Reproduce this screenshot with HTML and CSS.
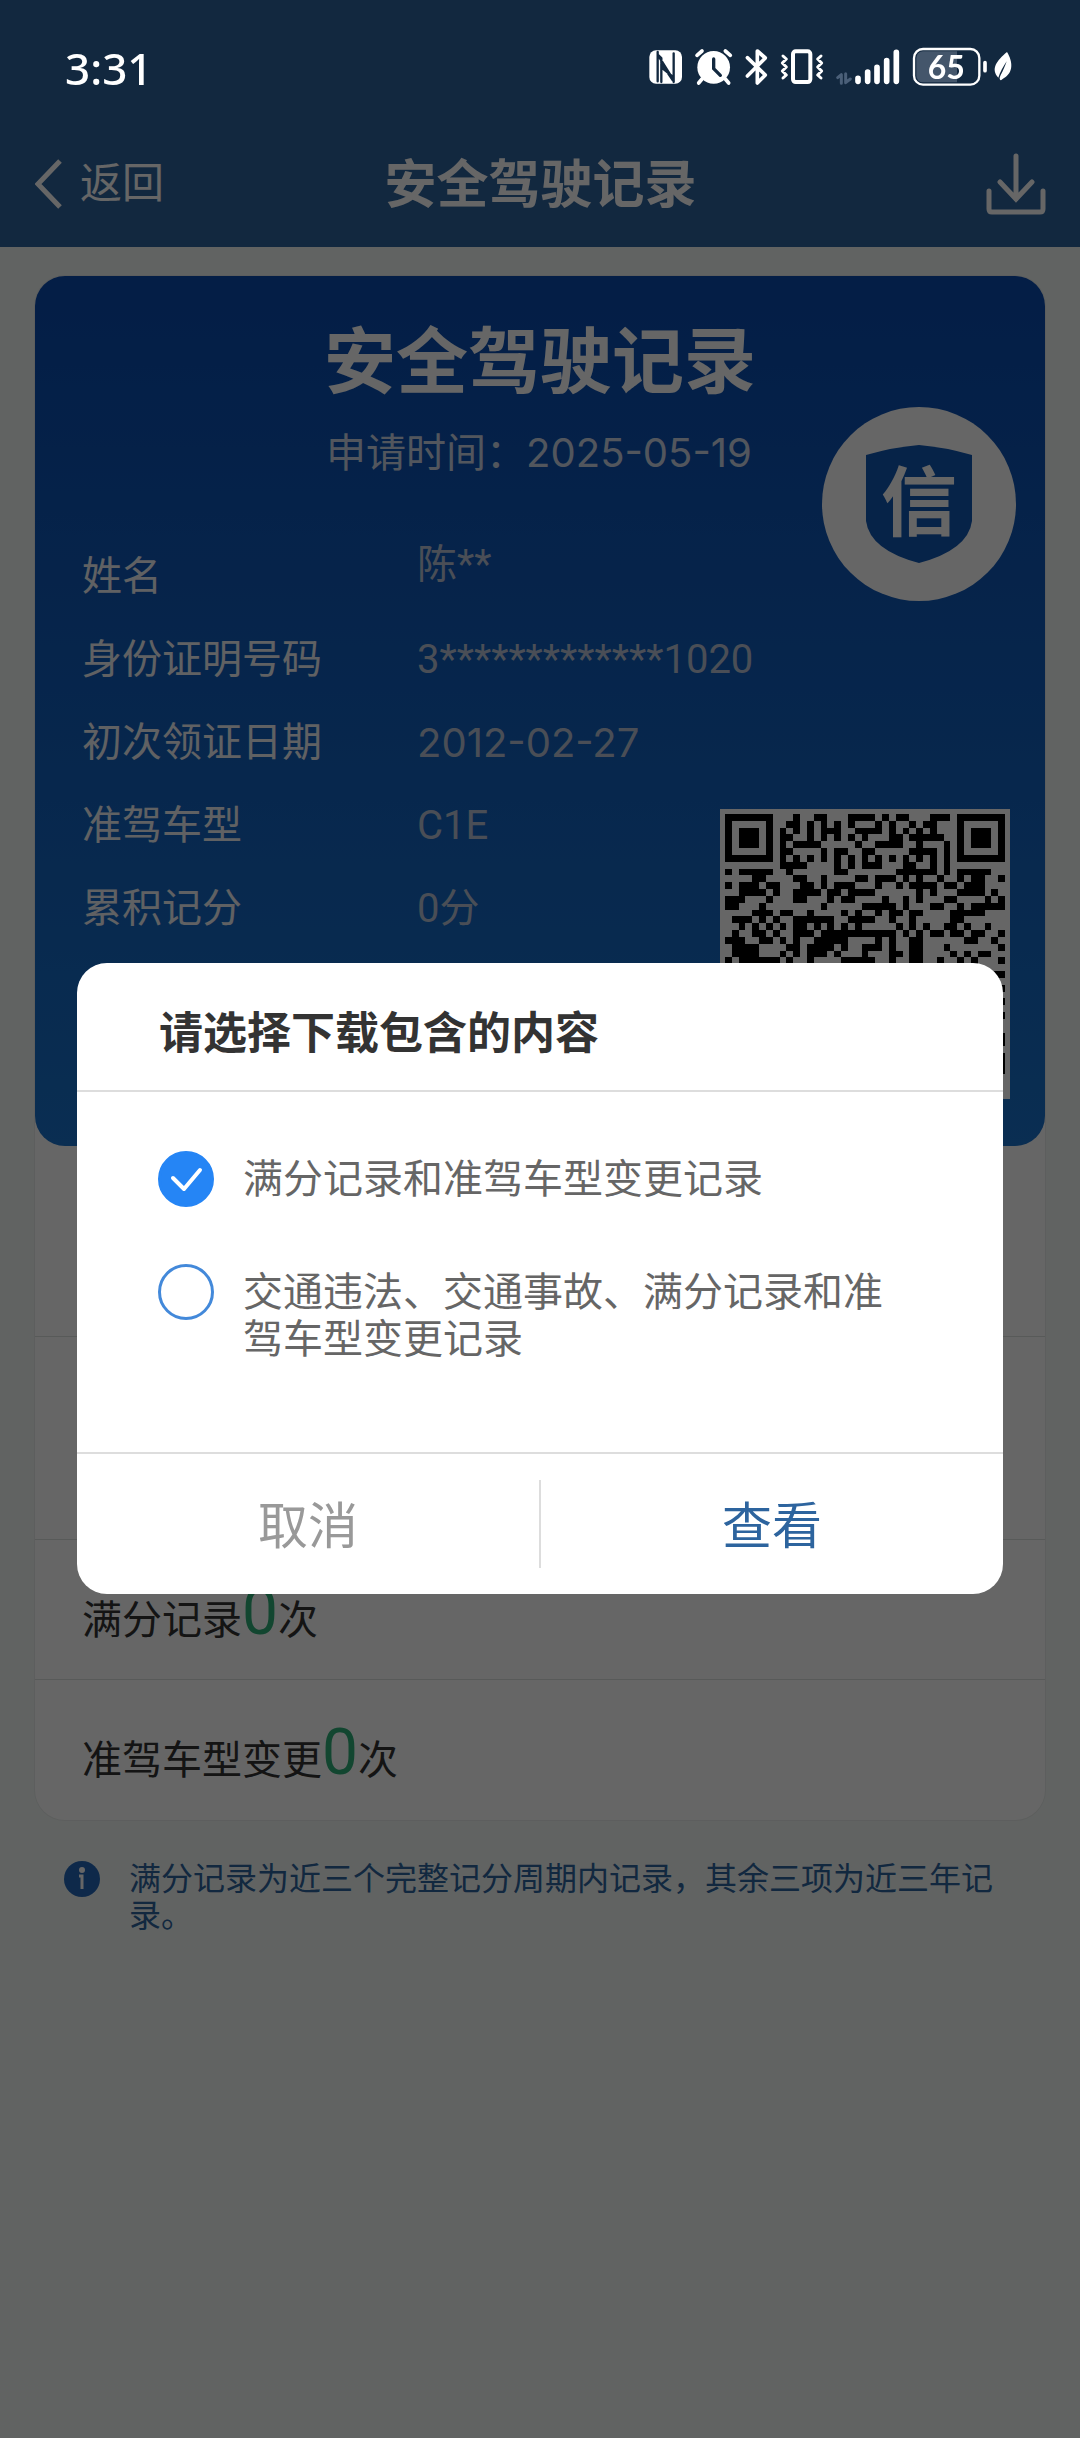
FILE: index.html
```html
<!DOCTYPE html>
<html lang="zh-CN">
<head>
<meta charset="utf-8">
<meta name="viewport" content="width=device-width, initial-scale=1">
<title>安全驾驶记录</title>
<link rel="stylesheet" href="styles.css">
</head>
<body>
<header class="topbar">
  <div class="status">
    <time class="clock">3:31</time>
    <svg class="status-icons" viewBox="0 0 1200 240" fill="none" stroke-linecap="round" stroke-linejoin="round" aria-hidden="true">
      <!-- NFC -->
      <rect x="28" y="61" width="98" height="100" rx="20" fill="#fff"/>
      <path d="M53 66v88M53 74L98 146M64 100L98 150M53 74L64 84V156M101 156V70M101 142L64 112" stroke="#12283f" stroke-width="7"/>
      <!-- alarm -->
      <circle cx="221" cy="112" r="49" fill="#fff"/>
      <path d="M171 76l15-13M271 76l-15-13M186 147l-10 12M256 147l10 12" stroke="#fff" stroke-width="11"/>
      <path d="M221 87v29l20 20" stroke="#12283f" stroke-width="10"/>
      <!-- bluetooth -->
      <path d="M322 83l54 52-24 24V63l24 21-54 54" stroke="#fff" stroke-width="11"/>
      <!-- vibrate -->
      <rect x="459" y="64" width="52" height="92" rx="8" stroke="#fff" stroke-width="12"/>
      <path d="M429 78l10 9-12 12 12 12-12 12 12 12-10 9M543 78l-10 9 12 12-12 12 12 12-12 12 10 9" stroke="#fff" stroke-width="9"/>
      <!-- data -->
      <path d="M593 143l11-9v26M617 131v27l14-11" stroke="#4a5f78" stroke-width="9"/>
      <!-- signal -->
      <path d="M654 145v9M683 126v28M711 112v42M740 92v62M769 67v87" stroke="#fff" stroke-width="17"/>
      <!-- battery -->
      <rect x="822" y="57" width="196" height="107" rx="27" stroke="#fff" stroke-width="7"/>
      <path d="M849 64h102v93h-102a20 20 0 0 1-20-20V84a20 20 0 0 1 20-20z" fill="#44566b"/>
      <path d="M1035 98v24" stroke="#fff" stroke-width="11"/>
      <text class="battery-level" x="919" y="147" text-anchor="middle">65</text>
      <!-- leaf -->
      <path d="M1101 66c18 29 20 62-10 79l-8 6c-7-3-3-10-1-16 8-15 13-26 18-41-10 16-20 32-25 49-24-26-5-51 26-77z" fill="#fff"/>
    </svg>
  </div>
  <nav class="nav">
    <a class="back" href="#">
      <svg class="back-icon" viewBox="0 0 28 50" aria-hidden="true"><path d="M25 2L3 25l22 23"/></svg>
      返回
    </a>
    <h1 class="nav-title">安全驾驶记录</h1>
    <button class="download" type="button" aria-label="下载">
      <svg class="download-icon" viewBox="0 0 60 62" aria-hidden="true"><path d="M30 3v43M14 29l16 17 16-17M3 38v18q0 3 3 3h48q3 0 3-3V38"/></svg>
    </button>
  </nav>
</header>

<main class="page">
  <section class="sheet">
    <div class="card">
      <h2 class="card-title">安全驾驶记录</h2>
      <p class="card-date">申请时间：<time class="date">2025-05-19</time></p>
      <div class="badge">
        <svg class="shield" viewBox="0 0 106 120" aria-hidden="true"><path d="M0 11Q28 3 53 1q25 2 53 10v66q-4 29-53 42Q4 106 0 77z"/></svg>
        <span class="badge-text">信</span>
      </div>
      <div class="card-body">
        <dl class="details">
          <dt>姓名</dt><dd class="top">陈**</dd>
          <dt>身份证明号码</dt><dd>3*************1020</dd>
          <dt>初次领证日期</dt><dd class="date">2012-02-27</dd>
          <dt>准驾车型</dt><dd>C1E</dd>
          <dt>累积记分</dt><dd>0分</dd>
        </dl>
        <svg class="qr" viewBox="0 0 41 41" role="img" aria-label="二维码">
          <!-- finder patterns -->
          <path d="M.5 .5h6v6h-6zM34.5 .5h6v6h-6zM.5 34.5h6v6h-6z"/>
          <path d="M2 3.5h3M36 3.5h3M2 37.5h3" stroke-width="3"/>
          <!-- data modules, one row of runs per line -->
          <path d="M10 .5h1M13 .5h2M18 .5h4M23 .5h1M25 .5h2M30 .5h3
M9 1.5h2M12 1.5h1M14 1.5h1M16 1.5h1M18 1.5h1M22 1.5h1M24 1.5h1M27 1.5h1M29 1.5h2
M8 2.5h1M10 2.5h1M12 2.5h1M14 2.5h3M19 2.5h4M24 2.5h1M26 2.5h1M28 2.5h1M30 2.5h1
M8 3.5h2M12 3.5h1M14 3.5h1M16 3.5h1M18 3.5h1M20 3.5h1M24 3.5h2M27 3.5h5
M8 4.5h1M10 4.5h4M19 4.5h1M22 4.5h2M24 4.5h2M28 4.5h1M32 4.5h1
M8 5.5h2M14 5.5h1M16 5.5h2M20 5.5h2M27 5.5h4M32 5.5h1
M8 6.5h1M10 6.5h1M12 6.5h1M14 6.5h1M16 6.5h1M18 6.5h1M20 6.5h1M22 6.5h1M24 6.5h1M26 6.5h1M28 6.5h1M30 6.5h1M32 6.5h1
M8 7.5h4M16 7.5h1M18 7.5h1M20 7.5h3M26 7.5h2M30 7.5h1M32 7.5h1
M0 8.5h1M2 8.5h5M9 8.5h1M16 8.5h2M25 8.5h6M32 8.5h1M34 8.5h5
M4 9.5h2M10 9.5h2M14 9.5h1M19 9.5h2M22 9.5h3M26 9.5h1M28 9.5h1M31 9.5h1M34 9.5h1M36 9.5h2M40 9.5h1
M0 10.5h1M2 10.5h3M6 10.5h2M11 10.5h2M14 10.5h1M16 10.5h3M22 10.5h1M25 10.5h1M27 10.5h4M32 10.5h2M35 10.5h3
M2 11.5h4M7 11.5h1M10 11.5h4M15 11.5h2M18 11.5h4M28 11.5h1M30 11.5h1M34 11.5h4M39 11.5h1
M0 12.5h3M6 12.5h1M10 12.5h2M15 12.5h1M17 12.5h2M23 12.5h1M26 12.5h1M28 12.5h1M32 12.5h2M38 12.5h1M40 12.5h1
M0 13.5h2M5 13.5h1M14 13.5h1M20 13.5h5M26 13.5h1M30 13.5h2M34 13.5h1M36 13.5h5
M4 14.5h3M8 14.5h2M12 14.5h1M17 14.5h1M19 14.5h1M22 14.5h1M24 14.5h2M27 14.5h2M33 14.5h5
M1 15.5h3M5 15.5h1M7 15.5h1M10 15.5h6M18 15.5h4M24 15.5h1M27 15.5h1M33 15.5h2
M2 16.5h1M4 16.5h1M6 16.5h1M8 16.5h1M10 16.5h2M13 16.5h1M15 16.5h1M17 16.5h1M19 16.5h1M25 16.5h1M27 16.5h1M29 16.5h1M32 16.5h2M35 16.5h1M38 16.5h1
M1 17.5h1M4 17.5h2M7 17.5h1M10 17.5h3M14 17.5h11M26 17.5h1M28 17.5h1M30 17.5h2M33 17.5h2M36 17.5h2M40 17.5h1
M0 18.5h3M5 18.5h2M8 18.5h1M10 18.5h1M13 18.5h5M22 18.5h1M24 18.5h1M27 18.5h2M35 18.5h2M39 18.5h1
M1 19.5h4M9 19.5h2M12 19.5h4M17 19.5h1M20 19.5h3M24 19.5h1M27 19.5h2M32 19.5h1M40 19.5h1
M1 20.5h4M8 20.5h1M10 20.5h1M12 20.5h3M16 20.5h1M20 20.5h1M24 20.5h2M27 20.5h2M33 20.5h1M35 20.5h1M37 20.5h2
M0 21.5h1M2 21.5h6M9 21.5h1M12 21.5h1M17 21.5h5M24 21.5h1M27 21.5h2M31 21.5h1M34 21.5h1M36 21.5h1M40 21.5h1
M39 23.5h2M40 25.5h1M40 27.5h1M40 29.5h1M40 32.5h1M40 33.5h1M40 35.5h1M40 36.5h1M40 37.5h1"/>
        </svg>
      </div>
    </div>
    <ul class="records">
      <li class="record tall"></li>
      <li class="record tall"></li>
      <li class="record">满分记录<b class="count">0</b>次</li>
      <li class="record">准驾车型变更<b class="count">0</b>次</li>
    </ul>
  </section>
  <p class="note">
    <svg class="note-icon" viewBox="0 0 36 36" aria-hidden="true"><circle cx="18" cy="18" r="18" fill="#2468b8"/><circle cx="18" cy="9" r="3" fill="#fff"/><path d="M15 15h3v13" fill="none" stroke="#fff" stroke-width="3"/></svg>
    <span>满分记录为近三个完整记分周期内记录，其余三项为近三年记录。</span>
  </p>
</main>

<div class="overlay">
  <form class="dialog" role="dialog" aria-labelledby="dialog-title">
    <h2 class="dialog-title" id="dialog-title">请选择下载包含的内容</h2>
    <div class="options">
      <label class="option"><input class="radio" type="radio" name="content" checked><span>满分记录和准驾车型变更记录</span></label>
      <label class="option"><input class="radio" type="radio" name="content"><span>交通违法、交通事故、满分记录和准驾车型变更记录</span></label>
    </div>
    <div class="actions">
      <button class="action" type="button">取消</button>
      <button class="action primary" type="button">查看</button>
    </div>
  </form>
</div>
</body>
</html>
```
FILE: styles.css
```css
* { box-sizing: border-box; }

body {
  margin: 0;
  min-height: 100vh;
  background: #f3f8f6;
  color: #333;
  font: 40px/60px Roboto, "Noto Sans CJK SC", sans-serif;
}

h1, h2, p, ul, dl, dd { margin: 0; padding: 0; }

button {
  border: 0;
  padding: 0;
  background: none;
  font: inherit;
}

/* top bar */
.topbar { background: #2d649e; color: #fff; }

.status {
  position: relative;
  z-index: 3;
  display: flex;
  align-items: center;
  justify-content: space-between;
  height: 120px;
  padding: 20px 40px 0 65px;
}

.clock { padding-bottom: 4px; font: 500 44px/60px "Noto Sans", sans-serif; }
.status-icons { width: 400px; height: 80px; }
.battery-level { fill: #fff; font: 700 96px Lato, sans-serif; }

.nav {
  display: grid;
  grid-template-columns: 1fr auto 1fr;
  align-items: center;
  height: 127px;
  padding: 0 34px 0 35px;
}

.back {
  display: flex;
  align-items: center;
  gap: 17px;
  color: #fff;
  font-size: 42px;
  text-decoration: none;
}

.back-icon { width: 28px; height: 50px; fill: none; stroke: #fff; stroke-width: 5; }
.nav-title { padding-top: 4px; font-size: 52px; font-weight: 700; }
.download { justify-self: end; height: 62px; color: #fff; }

.download-icon {
  display: block;
  width: 60px;
  height: 62px;
  fill: none;
  stroke: currentColor;
  stroke-width: 5;
  stroke-linecap: round;
}

/* record sheet */
.page { padding: 29px 35px; }
.sheet { border-radius: 30px; background: #fff; box-shadow: 0 0 0 1px #e8ecea; }

.card {
  position: relative;
  padding: 37px 35px 47px 47px;
  border-radius: 30px;
  background: linear-gradient(#0a4baf, #1973cd);
  color: #fff;
  text-align: center;
}

.card-title { padding-right: 12px; font-size: 72px; line-height: 100px; }
.card-date { padding: 10px 14px 0 0; color: #cdd8e8; }
.date { font-family: Inter, sans-serif; }

.badge {
  position: absolute;
  top: 131px;
  right: 29px;
  display: grid;
  place-items: center;
  width: 194px;
  height: 194px;
  border-radius: 50%;
  background: #fff;
}

.badge > * { grid-area: 1 / 1; }
.shield { width: 106px; height: 120px; fill: #0f57b4; }
.badge-text { font-size: 76px; font-weight: 700; line-height: 100px; }

.card-body {
  display: flex;
  align-items: flex-end;
  padding-top: 51px;
}

.details {
  flex: 1;
  display: grid;
  grid-template-columns: 335px minmax(0, 1fr);
  grid-auto-rows: 83px;
  align-items: center;
  min-width: 0;
  padding-bottom: 149px;
  text-align: left;
  white-space: nowrap;
}

.details dt { color: #f0f3f7; }
.details dd { color: #b8c4d6; }
.details .top { align-self: start; }

.qr {
  flex: none;
  width: 290px;
  height: 290px;
  padding: 5px;
  background: #fff;
  fill: none;
  stroke: #000;
  shape-rendering: crispEdges;
}

.records { list-style: none; }

.record {
  display: flex;
  align-items: baseline;
  height: 140px;
  padding: 43px 47px 0;
  border-bottom: 1px solid #dde1df;
}

.record.tall { height: 203px; }
.record.tall:first-child { height: 191px; }
.record:last-child { border-bottom: 0; }
.count { color: #2fae78; font-size: 64px; font-weight: 400; }

.note {
  display: flex;
  gap: 29px;
  padding: 41px 18px 0 29px;
  color: #2d649e;
  font-size: 32px;
  line-height: 37px;
}

.note-icon { flex: none; width: 36px; height: 36px; }

/* dialog */
.overlay {
  position: fixed;
  inset: 0;
  z-index: 2;
  display: flex;
  align-items: center;
  justify-content: center;
  padding: 119px 77px 0;
  background: rgba(0, 0, 0, .6);
}

.dialog { width: 100%; border-radius: 30px; background: #fff; }

.dialog-title {
  padding: 41px 82px 26px;
  border-bottom: 2px solid #ddd;
  font-size: 44px;
}

.options {
  display: grid;
  gap: 57px;
  padding: 59px 82px 89px 81px;
  color: #666;
  line-height: 47px;
}

.option { display: flex; gap: 29px; }
.option span { padding-top: 5px; }

.radio {
  flex: none;
  appearance: none;
  width: 56px;
  height: 56px;
  margin: 0;
  border: 3px solid #4389da;
  border-radius: 50%;
}

.radio:checked {
  border-color: #2585f5;
  background: #2585f5 url("data:image/svg+xml,%3Csvg xmlns='http://www.w3.org/2000/svg' viewBox='0 0 50 50'%3E%3Cpath d='M12 24l11 11 16-19' fill='none' stroke='white' stroke-width='4' stroke-linecap='round' stroke-linejoin='round'/%3E%3C/svg%3E") center / 50px;
}

.actions {
  display: flex;
  padding: 26px 0;
  border-top: 2px solid #ddd;
}

.action { flex: 1; height: 88px; padding-top: 6px; color: #999; font-size: 50px; }
.action.primary { border-left: 2px solid #ddd; color: #2d649e; }
```
